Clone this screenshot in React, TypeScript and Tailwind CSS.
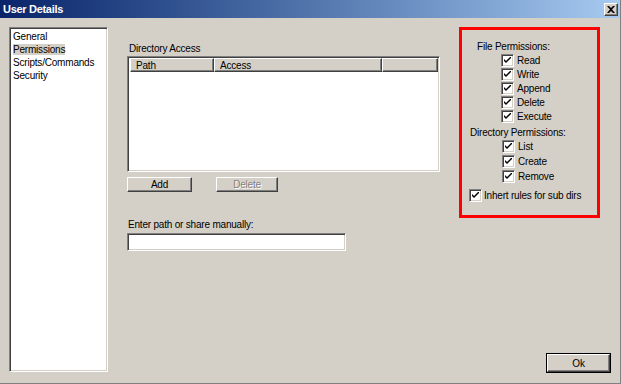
import React from 'react';

const sunken = 'border border-t-[#808080] border-l-[#808080] border-b-white border-r-white shadow-[inset_1px_1px_0_#404040,inset_-1px_-1px_0_#d4d0c8]';
const raised = 'border border-t-white border-l-white border-b-[#404040] border-r-[#404040] shadow-[inset_-1px_-1px_0_#808080]';

const Check = ({ label, gap = 'gap-[3px]' }: { label: string; gap?: string }) => (
  <div className={`flex items-center ${gap} h-[14px]`}>
    <span className={`w-[13px] h-[13px] bg-white flex items-center justify-center ${sunken}`}>
      <svg width="7" height="7" viewBox="0 0 7 7">
        <path d="M0 2 L0 4 L2 6 L7 1 L7 -1 L2 4 Z" fill="#000" />
      </svg>
    </span>
    <span>{label}</span>
  </div>
);

const App: React.FC = () => {
  const items = ['General', 'Permissions', 'Scripts/Commands', 'Security'];

  return (
    <div className="w-[621px] h-[384px] bg-[#d4d0c8] flex flex-col text-[10px] tracking-[-0.2px] leading-[13px] text-black font-['Liberation_Sans',Arial,sans-serif] border-r border-b border-[#808080]">
      {/* title bar */}
      <div className="h-[18px] flex items-center justify-between pl-[3px] pr-[2px] bg-gradient-to-r from-[#0a246a] to-[#a6caf0]">
        <span className="text-white font-bold text-[11px] tracking-[-0.3px]">User Details</span>
        <button className={`w-[14px] h-[13px] bg-[#d4d0c8] flex items-center justify-center ${raised}`}>
          <svg width="8" height="7" viewBox="0 0 8 7">
            <path d="M0 0 L2 0 L4 2 L6 0 L8 0 L5 3.5 L8 7 L6 7 L4 5 L2 7 L0 7 L3 3.5 Z" fill="#000" />
          </svg>
        </button>
      </div>

      <div className="flex-1 flex pl-[9px] pr-[10px] pt-[9px] pb-[11px]">
        {/* nav list */}
        <div className={`w-[99px] bg-white pt-[2px] pl-[3px] ${sunken}`}>
          {items.map(it => (
            <div key={it} className="h-[13px]">
              <span className={it === 'Permissions' ? 'bg-[#d4d0c8]' : ''}>{it}</span>
            </div>
          ))}
        </div>

        {/* middle */}
        <div className="ml-[19px] w-[313px] flex flex-col pt-[15px]">
          <div className="pl-[2px] h-[14px]">Directory Access</div>
          <div className={`h-[116px] bg-white flex flex-col p-[1px] ${sunken}`}>
            <div className="flex h-[14px] bg-[#d4d0c8] ml-[1px]">
              <div className={`w-[84px] pl-[5px] ${raised}`}>Path</div>
              <div className={`w-[168px] pl-[5px] ${raised}`}>Access</div>
              <div className={`flex-1 ${raised}`}></div>
            </div>
          </div>
          <div className="flex mt-[5px] h-[15px]">
            <button className={`w-[65px] h-[15px] bg-[#d4d0c8] flex items-center justify-center ${raised}`}>Add</button>
            <button className={`ml-[24px] w-[62px] h-[15px] bg-[#d4d0c8] flex items-center justify-center text-[#808080] [text-shadow:1px_1px_0_#fff] ${raised}`}>Delete</button>
          </div>
          <div className="mt-[26px] pl-[1px] h-[15px]">Enter path or share manually:</div>
          <div className={`w-[219px] h-[18px] bg-white ${sunken}`}></div>
        </div>

        {/* right */}
        <div className="ml-[19px] flex-1 flex flex-col justify-between">
          <div className="w-[141px] h-[191px] border-[3px] border-[#ff0000] pt-[10px] pl-[7px]">
            <div className="pl-[8px] h-[14px]">File Permissions:</div>
            <div className="pl-[32px] flex flex-col mt-[-1px]">
              <Check label="Read" />
              <Check label="Write" />
              <Check label="Append" />
              <Check label="Delete" />
              <Check label="Execute" />
            </div>
            <div className="pl-[1px] mt-[3px] h-[14px]">Directory Permissions:</div>
            <div className="pl-[33px] flex flex-col gap-[1px] mt-[-1px]">
              <Check label="List" />
              <Check label="Create" />
              <Check label="Remove" />
            </div>
            <div className="mt-[5px]">
              <Check label="Inhert rules for sub dirs" gap="gap-[2px]" />
            </div>
          </div>
          <button className={`self-end w-[63px] h-[18px] bg-[#d4d0c8] flex items-center justify-center ${raised} outline outline-1 outline-black`}>Ok</button>
        </div>
      </div>
    </div>
  );
};

export default App;
